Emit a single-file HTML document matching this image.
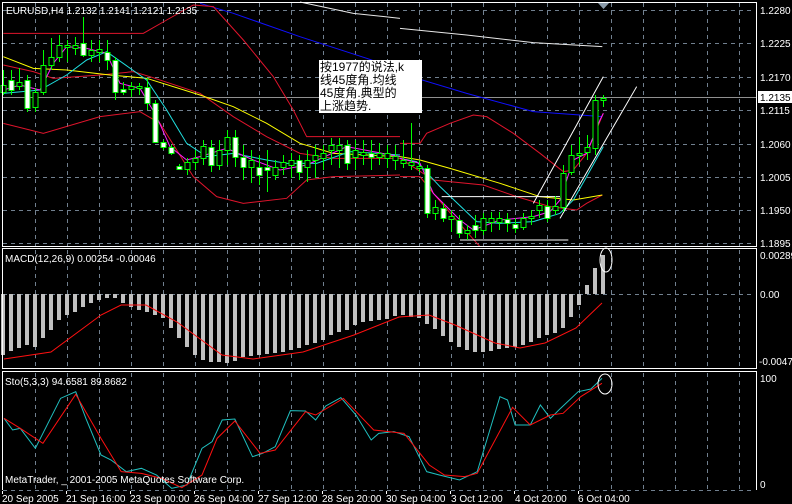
<!DOCTYPE html>
<html><head><meta charset="utf-8"><style>
html,body{margin:0;padding:0;background:#000;width:792px;height:504px;overflow:hidden}
svg{display:block}
text{font-family:"Liberation Sans","Noto Sans CJK SC",sans-serif;fill:#fff;font-size:10px}
</style></head><body>
<svg width="792" height="504" viewBox="0 0 792 504" xmlns="http://www.w3.org/2000/svg">
<rect width="792" height="504" fill="#000"/>
<!-- grids -->
<g stroke="#71808f" stroke-width="1" stroke-dasharray="4,4" fill="none">
<path d="M35.5 3V246M67.5 3V246M99.5 3V246M131.5 3V246M163.5 3V246M195.5 3V246M227.5 3V246M259.5 3V246M291.5 3V246M323.5 3V246M355.5 3V246M387.5 3V246M419.5 3V246M451.5 3V246M483.5 3V246M515.5 3V246M547.5 3V246M579.5 3V246M611.5 3V246M643.5 3V246M675.5 3V246M707.5 3V246M739.5 3V246"/>
<path d="M3 10.5H755M3 43.5H755M3 77.5H755M3 110.5H755M3 144.5H755M3 177.5H755M3 210.5H755M3 243.5H755"/>
<path d="M35.5 250V368M67.5 250V368M99.5 250V368M131.5 250V368M163.5 250V368M195.5 250V368M227.5 250V368M259.5 250V368M291.5 250V368M323.5 250V368M355.5 250V368M387.5 250V368M419.5 250V368M451.5 250V368M483.5 250V368M515.5 250V368M547.5 250V368M579.5 250V368M611.5 250V368M643.5 250V368M675.5 250V368M707.5 250V368M739.5 250V368"/>
<path d="M3 294.5H755"/>
<path d="M35.5 373V490M67.5 373V490M99.5 373V490M131.5 373V490M163.5 373V490M195.5 373V490M227.5 373V490M259.5 373V490M291.5 373V490M323.5 373V490M355.5 373V490M387.5 373V490M419.5 373V490M451.5 373V490M483.5 373V490M515.5 373V490M547.5 373V490M579.5 373V490M611.5 373V490M643.5 373V490M675.5 373V490M707.5 373V490M739.5 373V490"/>
<path d="M3 490.5H755"/>
</g>
<!-- price line -->
<path d="M3 97.5H756" stroke="#909090" stroke-width="1"/>
<!-- main chart indicators (zoom1 coords) -->
<g transform="scale(0.33333)" fill="none" stroke-width="1" vector-effect="non-scaling-stroke">
<polyline vector-effect="non-scaling-stroke" stroke="#e8e8e8" points="900,6 1060,40 1200,55"/>
<polyline vector-effect="non-scaling-stroke" stroke="#1010ff" points="600,10 700,40 900,110 1100,175 1200,210"/>
<polyline vector-effect="non-scaling-stroke" stroke="#e0142c" points="10,100 180,100 430,100 500,60 580,15 640,20 730,120 820,230 880,330 920,410 1200,410"/>
<polyline vector-effect="non-scaling-stroke" stroke="#e0142c" points="10,370 130,400 300,350 420,335 480,370 580,530 650,590 730,610 860,595 920,540 1000,530 1200,525"/>
<polyline vector-effect="non-scaling-stroke" stroke="#e0142c" points="10,195 100,215 160,235 300,225 400,215 450,230 600,280 700,350 800,410 900,460 1000,475 1200,475"/>
<polyline vector-effect="non-scaling-stroke" stroke="#ffff00" points="10,170 100,205 200,210 330,225 440,235 600,285 700,320 800,370 900,430 1000,460 1200,470"/>
<polyline vector-effect="non-scaling-stroke" stroke="#20e0e0" points="10,280 120,270 200,225 260,180 320,155 440,240 500,330 560,430 620,470 700,460 800,480 860,490 950,490 1050,455 1200,465"/>
<polyline vector-effect="non-scaling-stroke" stroke="#ff20ff" points="10,270 60,255 120,270 160,190 200,140 260,145 320,160 360,250 420,265 470,350 510,440 560,480 600,470 680,445 760,480 840,510 920,495 1040,440 1200,470"/>
</g>
<g transform="translate(400,0) scale(0.33333)" fill="none">
<polyline vector-effect="non-scaling-stroke" stroke="#e8e8e8" points="0,85 200,105 400,128 607,140"/>
<polyline vector-effect="non-scaling-stroke" stroke="#1010ff" points="0,220 200,280 400,335 607,350"/>
<polyline vector-effect="non-scaling-stroke" stroke="#e0142c" points="0,430 60,430 80,400 150,370 220,345 260,350 340,400 420,460 490,515 520,510 560,460 610,340"/>
<polyline vector-effect="non-scaling-stroke" stroke="#e0142c" points="0,530 60,530 100,580 160,650 240,740"/>
<polyline vector-effect="non-scaling-stroke" stroke="#e0142c" points="0,475 100,540 250,555 350,590 450,620 530,630 560,610 607,585"/>
<polyline vector-effect="non-scaling-stroke" stroke="#ffff00" points="0,470 60,480 150,505 300,550 420,590 520,600 607,585"/>
<polyline vector-effect="non-scaling-stroke" stroke="#20e0e0" points="0,475 50,485 120,560 230,665 300,670 400,665 480,640 520,600 560,530 610,440"/>
<polyline vector-effect="non-scaling-stroke" stroke="#ff20ff" points="0,475 60,490 100,580 180,660 220,690 300,660 400,650 450,635 480,600 520,480 560,460 600,360 610,340"/>
<path vector-effect="non-scaling-stroke" stroke="#fff" d="M400 610L610 230M480 655L710 260M125 590H480M180 720H505"/>
</g>
<!-- candles -->
<g stroke="#00ff00" stroke-width="1">
<path d="M3.5 70V95M11.5 70V95M19.5 68V90M27.5 75V112M35.5 88V112M43.5 50V95M51.5 38V70M59.5 35V62M67.5 40V62M75.5 37V55M83.5 17V57M91.5 40V62M99.5 40V62M107.5 40V70M115.5 57V100M123.5 82V95M131.5 82V97M139.5 83V95M147.5 78V110M155.5 100V143M163.5 140V150M171.5 145V155M179.5 164V170M187.5 158V175M195.5 150V170M203.5 140V165M211.5 140V172M219.5 140V170M227.5 130V165M235.5 130V167M243.5 145V180M251.5 150V183M259.5 155V185M267.5 150V192M275.5 160V180M283.5 155V175M291.5 153V178M299.5 155V180M307.5 150V182M315.5 145V178M323.5 145V170M331.5 138V165M339.5 138V168M347.5 140V170M355.5 140V170M363.5 140V165M371.5 140V170M379.5 143V165M387.5 145V168M395.5 145V170M403.5 140V168M411.5 123V170M419.5 160V172M427.5 165V218M435.5 200V220M443.5 203V222M451.5 210V232M459.5 215V238M467.5 225V240M475.5 215V238M483.5 213V235M491.5 212V232M499.5 212V230M507.5 213V232M515.5 218V233M523.5 213V230M531.5 210V225M539.5 200V218M547.5 200V222M555.5 196V215M563.5 165V212M571.5 145V175M579.5 137V165M587.5 135V160M595.5 95V155M603.5 95V107"/>
</g>
<g stroke="#00ff00" stroke-width="1">
<g fill="#000">
<rect x="1" y="85.5" width="5" height="7"/><rect x="17" y="82.5" width="5" height="4"/><rect x="33" y="92.5" width="5" height="15"/><rect x="41" y="65.5" width="5" height="27"/><rect x="49" y="57.5" width="5" height="8"/><rect x="57" y="45.5" width="5" height="12"/><rect x="65" y="45.5" width="5" height="2"/><rect x="73" y="45.5" width="5" height="3"/><rect x="89" y="50.5" width="5" height="5"/><rect x="97" y="49.5" width="5" height="3"/><rect x="129" y="86.5" width="5" height="3"/><rect x="137" y="86.5" width="5" height="2"/><rect x="185" y="162.5" width="5" height="7"/><rect x="193" y="158.5" width="5" height="4"/><rect x="201" y="146.5" width="5" height="12"/><rect x="217" y="150.5" width="5" height="15"/><rect x="225" y="137.5" width="5" height="13"/><rect x="249" y="160.5" width="5" height="7"/><rect x="273" y="167.5" width="5" height="8"/><rect x="281" y="162.5" width="5" height="5"/><rect x="289" y="160.5" width="5" height="5"/><rect x="305" y="160.5" width="5" height="7"/><rect x="313" y="155.5" width="5" height="5"/><rect x="321" y="153.5" width="5" height="5"/><rect x="329" y="145.5" width="5" height="5"/><rect x="337" y="145.5" width="5" height="5"/><rect x="353" y="150.5" width="5" height="7"/><rect x="361" y="152.5" width="5" height="3"/><rect x="377" y="153.5" width="5" height="4"/><rect x="385" y="153.5" width="5" height="5"/><rect x="393" y="156.5" width="5" height="4"/><rect x="401" y="160.5" width="5" height="3"/><rect x="409" y="162.5" width="5" height="3"/><rect x="417" y="166.5" width="5" height="2"/><rect x="433" y="207.5" width="5" height="6"/><rect x="449" y="216.5" width="5" height="3"/><rect x="465" y="230.5" width="5" height="3"/><rect x="481" y="218.5" width="5" height="12"/><rect x="489" y="218.5" width="5" height="4"/><rect x="497" y="218.5" width="5" height="4"/><rect x="521" y="218.5" width="5" height="9"/><rect x="529" y="216.5" width="5" height="2"/><rect x="537" y="205.5" width="5" height="5"/><rect x="553" y="206.5" width="5" height="4"/><rect x="561" y="173.5" width="5" height="34"/><rect x="569" y="155.5" width="5" height="17"/><rect x="577" y="153.5" width="5" height="2"/><rect x="585" y="147.5" width="5" height="5"/><rect x="593" y="100.5" width="5" height="48"/><rect x="601" y="98.5" width="5" height="2"/>
</g>
<g fill="#fff">
<rect x="9" y="80.5" width="5" height="10"/><rect x="25" y="80.5" width="5" height="28"/><rect x="81" y="43.5" width="5" height="12"/><rect x="105" y="52.5" width="5" height="8"/><rect x="113" y="60.5" width="5" height="32"/><rect x="121" y="89.5" width="5" height="3"/><rect x="145" y="87.5" width="5" height="16"/><rect x="153" y="103.5" width="5" height="39"/><rect x="161" y="142.5" width="5" height="5"/><rect x="169" y="147.5" width="5" height="6"/><rect x="177" y="166.5" width="5" height="3"/><rect x="209" y="147.5" width="5" height="18"/><rect x="233" y="137.5" width="5" height="20"/><rect x="241" y="157.5" width="5" height="10"/><rect x="257" y="167.5" width="5" height="8"/><rect x="265" y="167.5" width="5" height="3"/><rect x="297" y="160.5" width="5" height="12"/><rect x="345" y="145.5" width="5" height="18"/><rect x="369" y="153.5" width="5" height="4"/><rect x="425" y="168.5" width="5" height="45"/><rect x="441" y="208.5" width="5" height="10"/><rect x="457" y="220.5" width="5" height="13"/><rect x="473" y="225.5" width="5" height="5"/><rect x="505" y="219.5" width="5" height="4"/><rect x="513" y="224.5" width="5" height="4"/><rect x="545" y="206.5" width="5" height="12"/>
</g>
</g>
<!-- MACD bars -->
<path stroke="#c0c0c0" stroke-width="4" fill="none" d="M3 294V355M11 294V351M19 294V348M27 294V345M35 294V347M43 294V338M51 294V330M59 294V320M67 294V315M75 294V312M83 294V307M91 294V303M99 294V300M107 294V298M115 294V298M123 294V303M131 294V307M139 294V310M147 294V312M155 294V315M163 294V318M171 294V328M179 294V338M187 294V347M195 294V355M203 294V360M211 294V362M219 294V362M227 294V363M235 294V361M243 294V357M251 294V356M259 294V355M267 294V354M275 294V353M283 294V352M291 294V350M299 294V348M307 294V345M315 294V343M323 294V340M331 294V335M339 294V332M347 294V330M355 294V325M363 294V322M371 294V321M379 294V320M387 294V319M395 294V316M403 294V315M411 294V317M419 294V318M427 294V324M435 294V329M443 294V336M451 294V342M459 294V347M467 294V350M475 294V352M483 294V352M491 294V351M499 294V349M507 294V348M515 294V347M523 294V345M531 294V342M539 294V338M547 294V335M555 294V333M563 294V328M571 294V317M579 294V305M587 294V285M595 294V268M603 294V255"/>
<polyline fill="none" stroke="#ff1010" stroke-width="1" points="4,359 51,352 101,315 121,305 146,305 177,322 222,355 253,359 303,352 354,335 399,317 429,315 455,325 495,343 520,348 545,343 576,328 602,303"/>
<ellipse cx="606" cy="260" rx="6" ry="12" fill="none" stroke="#fff" stroke-width="1"/>
<!-- Stoch -->
<g transform="translate(0,245) scale(0.505,0.33333)" fill="none">
<polyline vector-effect="non-scaling-stroke" stroke="#20c0c0" points="8,520 25,555 40,550 70,610 100,520 120,460 150,440 170,520 200,630 220,645 250,680 280,670 310,690 340,730 370,720 400,610 420,590 440,525 465,522 500,635 520,625 545,605 575,497 605,498 625,525 645,483 675,458 705,510 735,585 750,565 780,560 810,575 845,680 870,690 910,705 945,680 990,455 1005,465 1020,540 1050,540 1070,480 1090,520 1110,490 1145,440 1170,432 1192,400"/>
<polyline vector-effect="non-scaling-stroke" stroke="#ff1010" points="8,520 40,550 85,595 150,448 200,580 240,680 280,685 320,700 360,728 400,690 430,580 465,528 515,625 545,615 605,500 625,510 680,460 740,555 800,565 850,660 880,690 920,695 945,685 1015,487 1050,540 1090,510 1115,505 1150,455 1192,415"/>
</g>
<ellipse cx="605" cy="384" rx="7" ry="10" fill="none" stroke="#fff" stroke-width="1"/>
<!-- panel borders -->
<g fill="none" stroke="#fff" stroke-width="1">
<rect x="2.5" y="2.5" width="754" height="244"/>
<rect x="2.5" y="248.5" width="754" height="120"/>
<path d="M2.5 490V371.5H756.5V490"/>
</g>
<path d="M598 3H609L603.5 9Z" fill="#8a9aa8"/>
<!-- text box -->
<rect x="319" y="60" width="103" height="53" fill="#fff"/>
<g style="font-size:12px">
<text x="320" y="71" style="fill:#000;font-size:12px">按1977的说法,k</text>
<text x="320" y="84" style="fill:#000;font-size:12px">线45度角.均线</text>
<text x="320" y="97" style="fill:#000;font-size:12px">45度角.典型的</text>
<text x="320" y="110" style="fill:#000;font-size:12px">上涨趋势.</text>
</g>
<!-- labels -->
<text x="6" y="14">EURUSD,H4  1.2132 1.2141 1.2121 1.2135</text>
<text x="5" y="262">MACD(12,26,9) 0.00254 -0.00046</text>
<text x="5" y="385">Sto(5,3,3) 94.6581 89.8682</text>
<text x="5" y="483">MetaTrader, _ 2001-2005 MetaQuotes Software Corp.</text>
<g>
<text x="760" y="14">1.2280</text>
<text x="760" y="47">1.2225</text>
<text x="760" y="81">1.2170</text>
<rect x="758" y="91" width="34" height="12" fill="#fff"/>
<text x="760" y="101" style="fill:#000">1.2135</text>
<text x="760" y="114">1.2115</text>
<text x="760" y="148">1.2060</text>
<text x="760" y="181">1.2005</text>
<text x="760" y="214">1.1950</text>
<text x="760" y="247">1.1895</text>
<text x="760" y="259">0.00289</text>
<text x="760" y="298">0.00</text>
<text x="759" y="365">-0.00473</text>
<text x="760" y="382">100</text>
<text x="760" y="488">0</text>
</g>
<g>
<text x="2" y="502">20 Sep 2005</text>
<text x="66" y="502">21 Sep 16:00</text>
<text x="130" y="502">23 Sep 00:00</text>
<text x="194" y="502">26 Sep 04:00</text>
<text x="258" y="502">27 Sep 12:00</text>
<text x="322" y="502">28 Sep 20:00</text>
<text x="386" y="502">30 Sep 04:00</text>
<text x="451" y="502">3 Oct 12:00</text>
<text x="515" y="502">4 Oct 20:00</text>
<text x="578" y="502">6 Oct 04:00</text>
</g>
<path d="M2.5 491V494M66.5 491V494M130.5 491V494M194.5 491V494M258.5 491V494M322.5 491V494M386.5 491V494M450.5 491V494M514.5 491V494M578.5 491V494" stroke="#fff"/>
</svg>
</body></html>
